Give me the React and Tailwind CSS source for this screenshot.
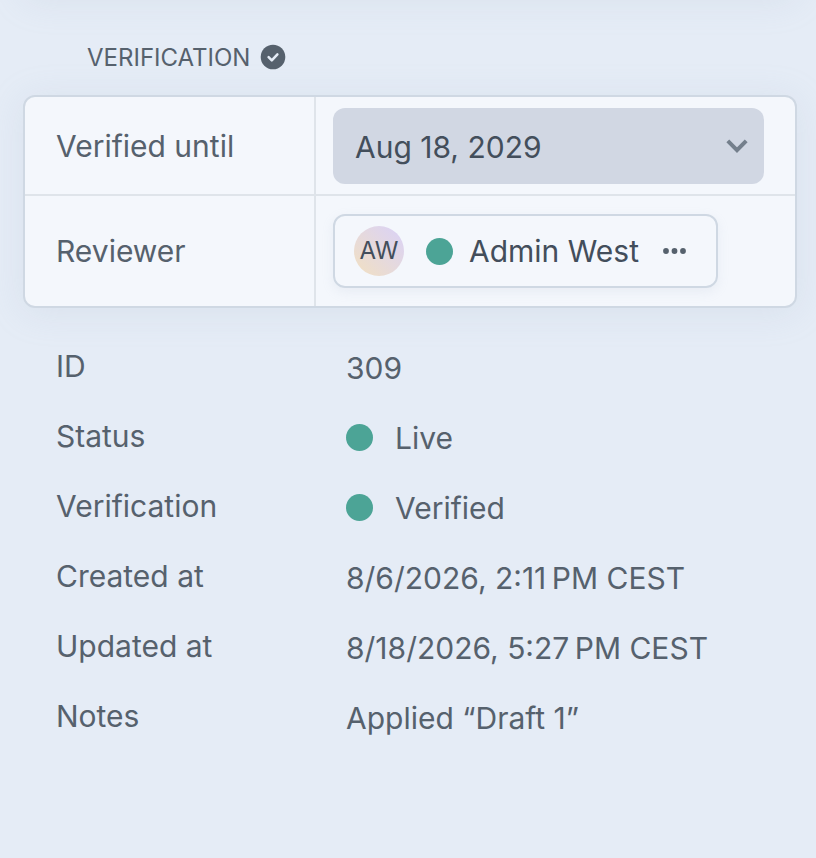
import React, { useState } from 'react';

const details = [
  { label: 'ID', value: '309' },
  { label: 'Status', value: 'Live', dot: true },
  { label: 'Verification', value: 'Verified', dot: true },
  { label: 'Created at', value: '8/6/2026, 2:11\u202fPM CEST' },
  { label: 'Updated at', value: '8/18/2026, 5:27\u202fPM CEST' },
  { label: 'Notes', value: 'Applied “Draft 1”' },
];

const StatusDot = () => <span className="size-[27px] shrink-0 rounded-full bg-[#4ca496]" />;

const VerifiedIcon = () => (
  <svg className="size-[26px]" viewBox="0 0 26 26" fill="none" aria-hidden="true">
    <circle cx="13" cy="13" r="12.3" fill="#56616d" />
    <path
      d="M8.6 13.2l3.2 3.2 5.6-6"
      stroke="#e5ecf6"
      strokeWidth="2.5"
      strokeLinecap="round"
      strokeLinejoin="round"
    />
  </svg>
);

const ChevronIcon = () => (
  <svg
    className="pointer-events-none col-start-1 row-start-1 mr-4 h-[14px] w-[22px] justify-self-end"
    viewBox="0 0 22 14"
    fill="none"
    aria-hidden="true"
  >
    <path d="M1.8 1.9l9.2 9.2 9.2-9.2" stroke="#747f8c" strokeWidth="4" />
  </svg>
);

const MoreIcon = () => (
  <svg className="h-[6px] w-[23px]" viewBox="0 0 23 6" fill="#56616d" aria-hidden="true">
    <circle cx="3" cy="3" r="2.9" />
    <circle cx="11.5" cy="3" r="2.9" />
    <circle cx="20" cy="3" r="2.9" />
  </svg>
);

const VerificationCard = () => {
  const [until, setUntil] = useState('2029-08-18');

  return (
    <div className="rounded-xl border-2 border-[#cfd8e3] bg-[#f4f7fc] shadow-[0_4px_36px_rgba(160,175,200,0.18)]">
      <div className="flex border-b-2 border-[#dfe4ea]">
        <label
          htmlFor="verified-until"
          className="flex w-[291px] shrink-0 items-center border-r-2 border-[#dfe4ea] pl-[31px]"
        >
          Verified until
        </label>
        <div className="grid flex-1 items-center pt-[11px] pr-[31px] pb-[10px] pl-[17px]">
          <select
            id="verified-until"
            value={until}
            onChange={(e) => setUntil(e.target.value)}
            className="col-start-1 row-start-1 h-[76px] w-full appearance-none rounded-xl bg-[#d1d7e3] pt-0.5 pl-[22px] text-[#434e5b]"
          >
            <option value="2029-08-18">Aug 18, 2029</option>
          </select>
          <ChevronIcon />
        </div>
      </div>
      <div className="flex">
        <div className="flex w-[291px] shrink-0 items-center border-r-2 border-[#dfe4ea] pl-[31px]">
          Reviewer
        </div>
        <div className="flex-1 py-[18px] pl-[17px]">
          <button
            type="button"
            className="flex h-[74px] items-center rounded-xl border-2 border-[#cfd8e3] pr-[30px] pl-[19px] text-[#434e5b] shadow-[0_4px_12px_rgba(160,175,200,0.14)]"
          >
            <span className="flex size-[50px] items-center justify-center rounded-full bg-linear-to-tr from-[#f2e0c0] to-[#d9d1f8] text-2xl">
              AW
            </span>
            <span className="ml-[22px] flex items-center gap-4">
              <StatusDot />
              Admin West
            </span>
            <span className="ml-6">
              <MoreIcon />
            </span>
          </button>
        </div>
      </div>
    </div>
  );
};

const App = () => {
  return (
    <main className="min-h-screen overflow-hidden bg-[#e5ecf6] pr-[19px] pl-[23px] font-['Inter',sans-serif] text-[30px] leading-10 text-[#56616d]">
      {/* lower edge of the previous card */}
      <div className="-mt-20 h-[76px] rounded-xl shadow-[0_4px_36px_rgba(160,175,200,0.18)]" />

      <h2 className="flex h-[99px] items-center gap-2.5 pt-[22px] pl-16 text-2xl">
        <span className="pt-0.5">VERIFICATION</span>
        <VerifiedIcon />
      </h2>

      <VerificationCard />

      <dl className="mt-[23px] pl-[33px]">
        {details.map((item) => (
          <div key={item.label} className="flex h-[70px] items-center">
            <dt className="w-[290px] shrink-0">{item.label}</dt>
            <dd className="flex items-center gap-[22px] pt-[3px]">
              {item.dot && <StatusDot />}
              {item.value}
            </dd>
          </div>
        ))}
      </dl>
    </main>
  );
};

export default App;
